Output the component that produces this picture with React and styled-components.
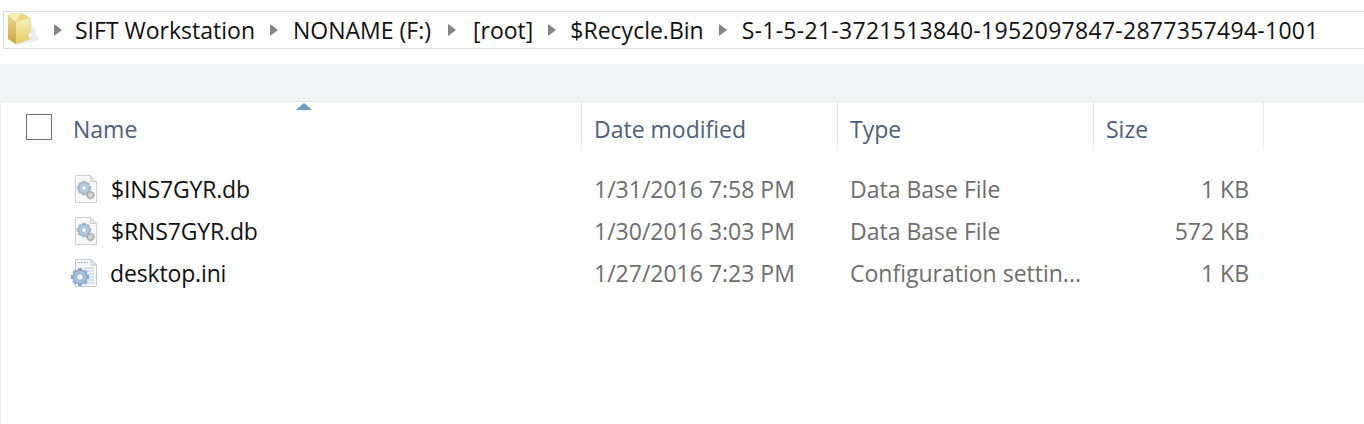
import React from 'react';
import styled, { createGlobalStyle } from 'styled-components';

const Global = createGlobalStyle`
  html, body { margin: 0; padding: 0; background: #fff; overflow: hidden; }
  body { font-family: "Open Sans", "Noto Sans", sans-serif; }
`;

const Page = styled.div`
  width: 1364px;
  height: 424px;
  padding-top: 11px;
  box-sizing: border-box;
  display: flex;
  flex-direction: column;
`;

const AddressBar = styled.div`
  height: 38px;
  margin-left: 3px;
  box-sizing: border-box;
  border: 1px solid #dcdcdc;
  border-right: none;
  display: flex;
  align-items: center;
  font-size: 23px;
  color: #111;
`;

const FolderBox = styled.span`
  display: flex;
  width: 50px;
  padding-left: 3px;
  box-sizing: border-box;
  margin-top: -2px;
`;

const Crumb = styled.span`
  display: flex;
  align-items: center;
  white-space: nowrap;
  margin-right: ${({ $gap }) => $gap}px;
  letter-spacing: ${({ $spacing }) => $spacing || 0}px;
`;

const Arrow = styled.span`
  width: 0;
  height: 0;
  border-left: 8px solid #858585;
  border-top: 6px solid transparent;
  border-bottom: 6px solid transparent;
  margin-right: ${({ $gap }) => $gap}px;
`;

const Band = styled.div`
  height: 37px;
  margin-top: 15px;
  background: #f3f4f6;
  border-bottom: 1px solid #e6e8eb;
`;

const Body = styled.div`
  flex: 1;
  border-left: 1px solid #eeeeee;
`;

const Header = styled.div`
  position: relative;
  display: flex;
  height: 49px;
`;

const SortArrow = styled.span`
  position: absolute;
  left: 295px;
  top: 1px;
  width: 0;
  height: 0;
  border-left: 8px solid transparent;
  border-right: 8px solid transparent;
  border-bottom: 7px solid #6a9fc4;
`;

const Column = styled.div`
  width: ${({ $w }) => $w}px;
  box-sizing: border-box;
  padding-left: ${({ $pad }) => $pad}px;
  padding-bottom: 1px;
  padding-top: 5px;
  display: flex;
  align-items: center;
  gap: 21px;
  font-size: 23px;
  color: #4c607a;
  border-right: 1px solid transparent;
  border-image: ${({ $plain }) =>
    $plain ? 'none' : 'linear-gradient(#e0e7f0 80%, #ffffff) 1'};
`;

const Check = styled.span`
  width: 26px;
  height: 26px;
  box-sizing: border-box;
  border: 1px solid #707070;
  background: #fff;
  margin-top: -4px;
`;

const Rows = styled.div`
  padding-top: 17px;
`;

const Row = styled.div`
  display: flex;
  align-items: center;
  height: 42px;
  font-size: 23px;
  color: #6d6d6d;
`;

const NameCell = styled.div`
  width: 581px;
  box-sizing: border-box;
  padding-left: ${({ $pad }) => $pad}px;
  display: flex;
  align-items: center;
  gap: ${({ $gap }) => $gap}px;
  color: #111;
  letter-spacing: -0.15px;
`;

const Cell = styled.div`
  width: 256px;
  box-sizing: border-box;
  padding-left: 12px;
  white-space: nowrap;
`;

const SizeCell = styled.div`
  width: 155px;
  text-align: right;
`;

const Gear = ({ cx, cy, r, fill, stroke }) => (
  <g>
    {[0, 45, 90, 135].map((a) => (
      <rect key={a} x={cx - r * 0.25} y={cy - r * 1.25} width={r * 0.5} height={r * 2.5} fill={fill} stroke={stroke} strokeWidth="0.5" transform={`rotate(${a} ${cx} ${cy})`} />
    ))}
    <circle cx={cx} cy={cy} r={r} fill={fill} stroke={stroke} strokeWidth="0.8" />
    <circle cx={cx} cy={cy} r={r * 0.45} fill="#f4f7fb" stroke={stroke} strokeWidth="0.5" />
  </g>
);

const DbIcon = () => (
  <svg width="24" height="30" viewBox="0 0 24 30">
    <path d="M1.5 1.5H16.5L22.5 7.5V28.5H1.5Z" fill="#f8f8f8" stroke="#d0d0d0" />
    <path d="M16.5 1.5V7.5H22.5Z" fill="#e8e8e8" stroke="#d0d0d0" />
    <Gear cx={10} cy={14} r={5.5} fill="#b5cde2" stroke="#7f9fbc" />
    <Gear cx={16.5} cy={21} r={3.2} fill="#d6d6d6" stroke="#9a9a9a" />
  </svg>
);

const IniIcon = () => (
  <svg width="28" height="30" viewBox="0 0 28 30">
    <path d="M5.5 1.5H21L26.5 7V28.5H5.5Z" fill="#f8f9fb" stroke="#c4c8cf" />
    <path d="M21 1.5V7H26.5Z" fill="#e2e5ea" stroke="#c4c8cf" />
    {[10, 13, 16, 19, 22, 25].map((y) => (
      <path key={y} d={`M15 ${y}H24`} stroke="#b5c9e0" />
    ))}
    <path d="M8 4.5H18" stroke="#aab" strokeDasharray="2 1" />
    <Gear cx={10} cy={19} r={7} fill="#a6c1e0" stroke="#6a8db5" />
  </svg>
);

const FolderIcon = () => (
  <svg width="32" height="34" viewBox="0 0 32 34">
    <defs>
      <linearGradient id="folderFront" x1="0" y1="0" x2="0" y2="1">
        <stop offset="0" stopColor="#f7eeb6" />
        <stop offset="1" stopColor="#e7cd6a" />
      </linearGradient>
      <linearGradient id="folderSide" x1="0" y1="0" x2="0" y2="1">
        <stop offset="0" stopColor="#ecd98c" />
        <stop offset="1" stopColor="#c9a63f" />
      </linearGradient>
    </defs>
    <path d="M10 10H24L32 28L10 33Z" fill="#d8d8d8" opacity="0.45" />
    <path d="M1 3L5 1H14L24 6V27L9 32L1 27Z" fill="#ecd67f" />
    <path d="M9 10L24 6V27L9 32Z" fill="url(#folderFront)" />
    <path d="M1 3L9 10V32L1 27Z" fill="url(#folderSide)" />
    <path d="M1 3L5 1H14L9 10Z" fill="#f7edb8" />
    <rect x="22" y="21" width="2" height="5" fill="#fff" />
  </svg>
);

const crumbs = [
  { label: 'SIFT Workstation', gap: 15, after: 13 },
  { label: 'NONAME (F:)', gap: 17, after: 15 },
  { label: '[root]', gap: 15, after: 17 },
  { label: '$Recycle.Bin', gap: 15, after: 14 },
  { label: 'S-1-5-21-3721513840-1952097847-2877357494-1001', gap: 0, after: 15, spacing: 0.28 },
];

const files = [
  { name: '$INS7GYR.db', date: '1/31/2016 7:58 PM', type: 'Data Base File', size: '1 KB', pad: 73, gap: 13, icon: <DbIcon /> },
  { name: '$RNS7GYR.db', date: '1/30/2016 3:03 PM', type: 'Data Base File', size: '572 KB', pad: 73, gap: 13, icon: <DbIcon /> },
  { name: 'desktop.ini', date: '1/27/2016 7:23 PM', type: 'Configuration settin...', size: '1 KB', pad: 69, gap: 12, icon: <IniIcon /> },
];

export default function App() {
  return (
    <Page>
      <Global />
      <AddressBar>
        <FolderBox><FolderIcon /></FolderBox>
        {crumbs.map((c) => (
          <React.Fragment key={c.label}>
            <Arrow $gap={c.after} />
            <Crumb $gap={c.gap} $spacing={c.spacing}>{c.label}</Crumb>
          </React.Fragment>
        ))}
      </AddressBar>
      <Band />
      <Body>
        <Header>
          <SortArrow />
          <Column $w={581} $pad={25}>
            <Check />
            Name
          </Column>
          <Column $w={256} $pad={12}>Date modified</Column>
          <Column $w={256} $pad={12}>Type</Column>
          <Column $w={170} $pad={12}>Size</Column>
          <Column $w={100} $pad={0} $plain />
        </Header>
        <Rows>
          {files.map((f) => (
            <Row key={f.name}>
              <NameCell $pad={f.pad} $gap={f.gap}>
                {f.icon}
                {f.name}
              </NameCell>
              <Cell>{f.date}</Cell>
              <Cell>{f.type}</Cell>
              <SizeCell>{f.size}</SizeCell>
            </Row>
          ))}
        </Rows>
      </Body>
    </Page>
  );
}
